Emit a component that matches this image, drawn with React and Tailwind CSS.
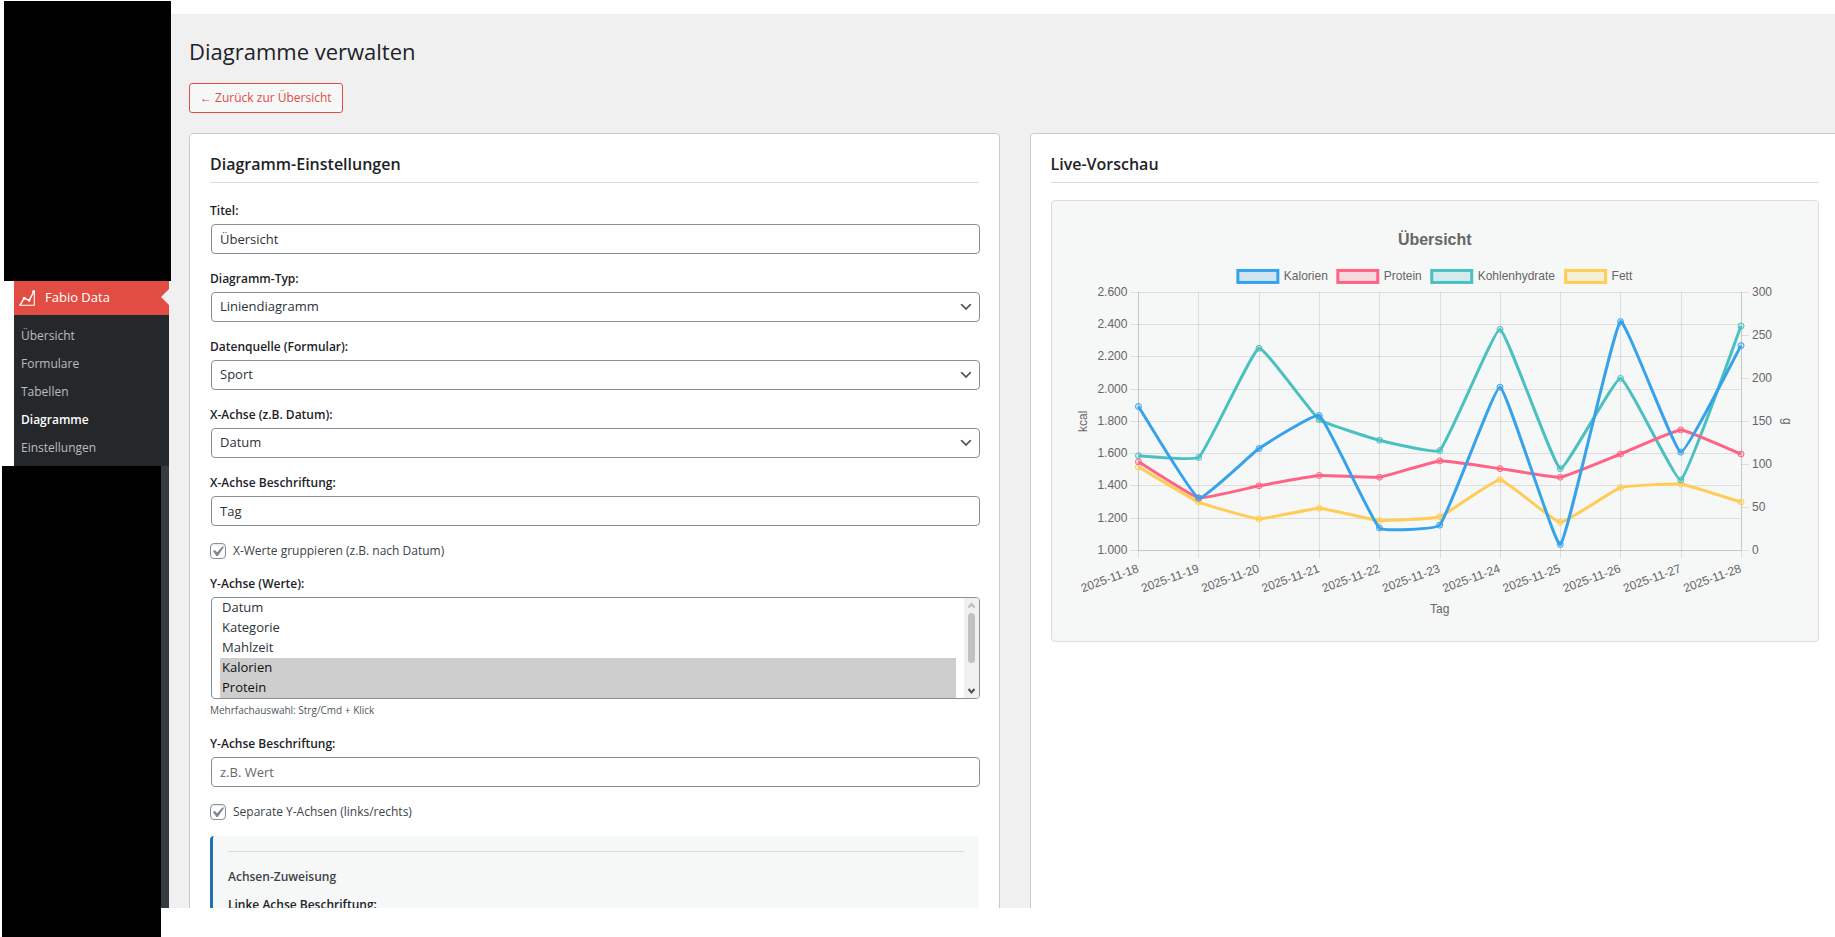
import { useId } from "react";

const DAYS = Array.from({ length: 11 }, (_, i) => `2025-11-${18 + i}`);

const SERIES = [
  {
    name: "Kalorien", color: "#36a2eb", min: 1000, max: 2600, legendX: 186,
    values: [1892, 1324, 1631, 1836, 1138, 1156, 2012, 1036, 2419, 1609, 2270],
  },
  {
    name: "Protein", color: "#ff6384", min: 0, max: 300, legendX: 286,
    values: [103, 61, 75, 87, 85, 104, 95, 85, 112, 140, 112],
  },
  {
    name: "Kohlenhydrate", color: "#4bc0c0", min: 0, max: 300, legendX: 380,
    values: [110, 108, 235, 152, 128, 116, 257, 95, 200, 82, 261],
  },
  {
    name: "Fett", color: "#ffcd56", min: 0, max: 300, legendX: 514,
    values: [97, 56, 36.5, 49, 34.5, 39, 82, 32.5, 73, 77, 56],
  },
];

const LEFT_TICKS = ["2.600", "2.400", "2.200", "2.000", "1.800", "1.600", "1.400", "1.200", "1.000"];
const RIGHT_TICKS = [300, 250, 200, 150, 100, 50, 0];

const AREA = { left: 86.5, right: 689.5, top: 91.5, bottom: 349.5 };
const W = AREA.right - AREA.left;
const H = AREA.bottom - AREA.top;

const xAt = (i) => AREA.left + (W * i) / (DAYS.length - 1);
const gridX = (i) => AREA.left + Math.round((W * i) / (DAYS.length - 1));
const gridY = (i, count) => AREA.top + Math.ceil((H * i) / (count - 1) - 0.5);

// Cubic spline through the points; handles are split by the distance to each neighbour.
function smoothPath(points, tension = 0.1) {
  const handles = points.map((p, i) => {
    const prev = points[i - 1] ?? p;
    const next = points[i + 1] ?? p;
    const d01 = Math.hypot(p.x - prev.x, p.y - prev.y);
    const d12 = Math.hypot(next.x - p.x, next.y - p.y);
    const fa = (tension * d01) / (d01 + d12);
    const fb = (tension * d12) / (d01 + d12);
    return {
      before: { x: p.x - fa * (next.x - prev.x), y: p.y - fa * (next.y - prev.y) },
      after: { x: p.x + fb * (next.x - prev.x), y: p.y + fb * (next.y - prev.y) },
    };
  });
  return points
    .map((p, i) => {
      if (i === 0) return `M${p.x} ${p.y}`;
      const a = handles[i - 1].after;
      const b = handles[i].before;
      return `C${a.x} ${a.y} ${b.x} ${b.y} ${p.x} ${p.y}`;
    })
    .join("");
}

function Chart() {
  return (
    <svg
      viewBox="0 0 767 440"
      role="img"
      aria-label="Übersicht"
      className="block w-full fill-[#666] font-['Liberation_Sans',Arial,sans-serif] text-[12px]"
    >
      <text x="383" y="44" textAnchor="middle" className="text-[16px] font-bold">Übersicht</text>

      {SERIES.map((s) => (
        <g key={s.name}>
          <rect x={s.legendX} y="69.5" width="40" height="12" fill={s.color} fillOpacity="0.2" stroke={s.color} strokeWidth="3" />
          <text x={s.legendX + 46} y="79">{s.name}</text>
        </g>
      ))}

      <g stroke="#000" strokeOpacity="0.1" shapeRendering="crispEdges">
        {DAYS.map((d, i) => (
          <line key={d} x1={gridX(i)} x2={gridX(i)} y1={AREA.top} y2={AREA.bottom + 8} />
        ))}
        {LEFT_TICKS.map((t, i) => (
          <line key={t} x1={AREA.left - 8} x2={AREA.right} y1={gridY(i, 9)} y2={gridY(i, 9)} />
        ))}
        {RIGHT_TICKS.map((t, i) => (
          <line key={t} x1={AREA.right} x2={AREA.right + 8} y1={gridY(i, 7)} y2={gridY(i, 7)} />
        ))}
        <line x1={AREA.left} x2={AREA.left} y1={AREA.top} y2={AREA.bottom} />
        <line x1={AREA.right} x2={AREA.right} y1={AREA.top} y2={AREA.bottom} />
        <line x1={AREA.left} x2={AREA.right} y1={AREA.bottom} y2={AREA.bottom} />
      </g>

      {LEFT_TICKS.map((t, i) => (
        <text key={t} x={AREA.left - 11} y={gridY(i, 9) + 3.5} textAnchor="end">{t}</text>
      ))}
      {RIGHT_TICKS.map((t, i) => (
        <text key={t} x={AREA.right + 11} y={gridY(i, 7) + 3.5}>{t}</text>
      ))}
      {DAYS.map((d, i) => (
        <text key={d} textAnchor="end" transform={`translate(${xAt(i) + 1} 371) rotate(-20)`}>{d}</text>
      ))}
      <text x="388" y="412" textAnchor="middle">Tag</text>
      <text textAnchor="middle" transform="translate(35 220.5) rotate(-90)">kcal</text>
      <text textAnchor="middle" transform="translate(731 220.5) rotate(90)">g</text>

      {[...SERIES].reverse().map((s) => {
        const points = s.values.map((v, i) => ({
          x: xAt(i),
          y: AREA.bottom - ((v - s.min) / (s.max - s.min)) * H,
        }));
        return (
          <g key={s.name} stroke={s.color}>
            <path d={smoothPath(points)} fill="none" strokeWidth="3" />
            {points.map((p) => (
              <circle key={p.x} cx={p.x} cy={p.y} r="3" fill={s.color} fillOpacity="0.2" />
            ))}
          </g>
        );
      })}
    </svg>
  );
}

const LABEL = "block text-[12px] leading-[18px] font-semibold text-[#1d2327]";
const CONTROL =
  "-mr-px ml-px block h-[30px] w-full appearance-none rounded border border-[#8c8f94] bg-white px-2 text-[13px] text-[#2c3338] placeholder:text-[#646970]";

function Field({ label, children }) {
  const id = useId();
  return (
    <div>
      <label htmlFor={id} className={`${LABEL} mb-1`}>{label}</label>
      {children(id)}
    </div>
  );
}

function TextField({ label, ...props }) {
  return (
    <Field label={label}>
      {(id) => (
        <div className="flex">
          <input id={id} type="text" className={`${CONTROL} shrink-0`} {...props} />
        </div>
      )}
    </Field>
  );
}

function SelectField({ label, options }) {
  return (
    <Field label={label}>
      {(id) => (
        <div className="relative flex">
          <select id={id} className={`${CONTROL} shrink-0`}>
            {options.map((o) => <option key={o}>{o}</option>)}
          </select>
          <svg viewBox="0 0 20 20" className="pointer-events-none absolute top-[7px] right-[5px] size-4 fill-[#555]">
            <path d="M5 6l5 5 5-5 2 1-7 7-7-7 2-1z" />
          </svg>
        </div>
      )}
    </Field>
  );
}

function CheckField({ label }) {
  return (
    <label className="flex h-[17px] items-center gap-[7px] text-[12px] text-[#3c434a]">
      <span className="relative flex size-4 shrink-0">
        <input
          type="checkbox"
          defaultChecked
          className="size-4 appearance-none rounded border border-[#8c8f94] bg-white shadow-[inset_0_1px_2px_rgba(0,0,0,0.1)]"
        />
        <svg viewBox="0 0 20 20" className="pointer-events-none absolute -top-[2px] -left-[3px] size-[21px] fill-[#7e8993]">
          <path d="M14.83 4.89l1.34.94-5.81 8.38H9.02L5.78 9.67l1.34-1.25 2.57 2.4z" />
        </svg>
      </span>
      {label}
    </label>
  );
}

function ValueList() {
  return (
    <Field label="Y-Achse (Werte):">
      {(id) => (
        <>
          <div className="-mr-px ml-px flex h-[102px] overflow-hidden rounded border border-[#8c8f94] bg-white">
            <select
              id={id}
              multiple
              size={5}
              defaultValue={["Kalorien", "Protein", "Kohlenhydrate", "Fett"]}
              className="h-full min-w-0 flex-1 appearance-none border-0 bg-transparent px-2 py-0 text-[13px] text-[#2c3338] outline-none [scrollbar-width:none] [&>option]:h-5 [&>option]:min-h-5 [&>option]:px-[2px] [&>option]:py-0 [&>option]:leading-5"
            >
              {["Datum", "Kategorie", "Mahlzeit", "Kalorien", "Protein", "Kohlenhydrate", "Fett"].map((o) => (
                <option key={o} value={o}>{o}</option>
              ))}
            </select>
            <div className="flex w-[15px] flex-col items-center justify-between bg-[#f0f0f0]" aria-hidden="true">
              <svg viewBox="0 0 15 15" className="size-[15px] fill-none stroke-[#bcbcbc] stroke-2">
                <path d="M4.5 9.5l3-3.5 3 3.5" />
              </svg>
              <div className="mb-auto h-[50px] w-[7px] rounded-sm bg-[#c1c1c1]" />
              <svg viewBox="0 0 15 15" className="size-[15px] fill-none stroke-[#505050] stroke-2">
                <path d="M4.5 6l3 3.5 3-3.5" />
              </svg>
            </div>
          </div>
          <p className="mt-[2px] text-[10px] leading-[18px] text-[#50575e]">Mehrfachauswahl: Strg/Cmd + Klick</p>
        </>
      )}
    </Field>
  );
}

function Card({ title, children }) {
  return (
    <section className="min-w-0 rounded border border-[#c9cacc] bg-white p-5">
      <h2 className="border-b border-[#dcdcde] pb-2 text-[16px] leading-5 font-semibold text-[#1d2327]">{title}</h2>
      {children}
    </section>
  );
}

function Sidebar() {
  const items = ["Übersicht", "Formulare", "Tabellen", "Diagramme", "Einstellungen"];
  return (
    <aside className="relative z-10 flex w-[169px] shrink-0 flex-col pt-px">
      <div className="-mr-[2px] ml-1 h-[280px] shrink-0 bg-black" />
      <nav className="ml-[14px]">
        <a href="#fabio-data" className="relative flex h-[34px] items-center bg-[#e14d43] pl-[5px] text-[13px] text-white">
          <svg viewBox="0 0 16 16" className="mr-[10px] size-4 fill-none stroke-white">
            <path d="M1 15.2L5.2 8.2l5 2.2L14.6 2" strokeWidth="1.4" />
            <path d="M.2 15.3h15.1V1" strokeWidth="1.1" />
            <g className="fill-white stroke-none">
              <circle cx="5.2" cy="8.3" r="1.5" />
              <circle cx="10.1" cy="10.4" r="1.3" />
              <circle cx="14.7" cy="1.6" r="1.6" />
            </g>
          </svg>
          Fabio Data
          <svg viewBox="0 0 8 16" className="absolute top-2 right-0 h-4 w-2 fill-[#f0f0f1]">
            <path d="M8 0v16L0 8z" />
          </svg>
        </a>
        <ul className="bg-[#25282b] pt-[7px] pb-1">
          {items.map((item) => (
            <li key={item}>
              <a
                href={`#${item.toLowerCase()}`}
                className={`flex h-7 items-center pl-[7px] text-[12px] ${item === "Diagramme" ? "font-semibold text-white" : "text-[#bcbdbe]"}`}
              >
                {item}
              </a>
            </li>
          ))}
        </ul>
      </nav>
      <div className="flex flex-1 pl-[2px]">
        <div className="flex-1 bg-black" />
        <div className="mb-[29px] w-2 bg-[#363b3f]" />
      </div>
    </aside>
  );
}

export default function App() {
  return (
    <div className="flex h-screen overflow-hidden bg-white font-['Open_Sans','Noto_Sans',sans-serif]">
      <Sidebar />
      <main className="mt-[14px] mb-[29px] min-w-0 flex-1 overflow-hidden bg-[#f0f0f1] pt-[21px] pl-5">
        <h1 className="text-[22px] leading-8 text-[#1d2327]">Diagramme verwalten</h1>
        <button
          type="button"
          className="mt-4 block h-[30px] rounded-[3px] border border-[#e14d43] bg-[#f6f7f7] px-[10px] text-[12px] text-[#e14d43]"
        >
          ← Zurück zur Übersicht
        </button>
        <div className="mt-5 -mr-[5px] grid grid-cols-2 gap-[30px]">
          <Card title="Diagramm-Einstellungen">
            <form className="mt-[19px] flex flex-col gap-4">
              <TextField label="Titel:" defaultValue="Übersicht" />
              <SelectField label="Diagramm-Typ:" options={["Liniendiagramm"]} />
              <SelectField label="Datenquelle (Formular):" options={["Sport"]} />
              <SelectField label="X-Achse (z.B. Datum):" options={["Datum"]} />
              <TextField label="X-Achse Beschriftung:" defaultValue="Tag" />
              <CheckField label="X-Werte gruppieren (z.B. nach Datum)" />
              <ValueList />
              <TextField label="Y-Achse Beschriftung:" placeholder="z.B. Wert" />
              <CheckField label="Separate Y-Achsen (links/rechts)" />
              <div className="rounded border-l-[3px] border-[#2271b1] bg-[#f6f7f7] p-[15px]">
                <hr className="border-[#dcdcde]" />
                <h3 className="mt-4 mb-[10px] text-[12px] leading-[18px] font-semibold text-[#3c434a]">Achsen-Zuweisung</h3>
                <TextField label="Linke Achse Beschriftung:" defaultValue="kcal" />
              </div>
            </form>
          </Card>
          <Card title="Live-Vorschau">
            <div className="mt-[17px] rounded border border-[#dcdcde] bg-[#f6f7f7]">
              <Chart />
            </div>
          </Card>
        </div>
      </main>
    </div>
  );
}
